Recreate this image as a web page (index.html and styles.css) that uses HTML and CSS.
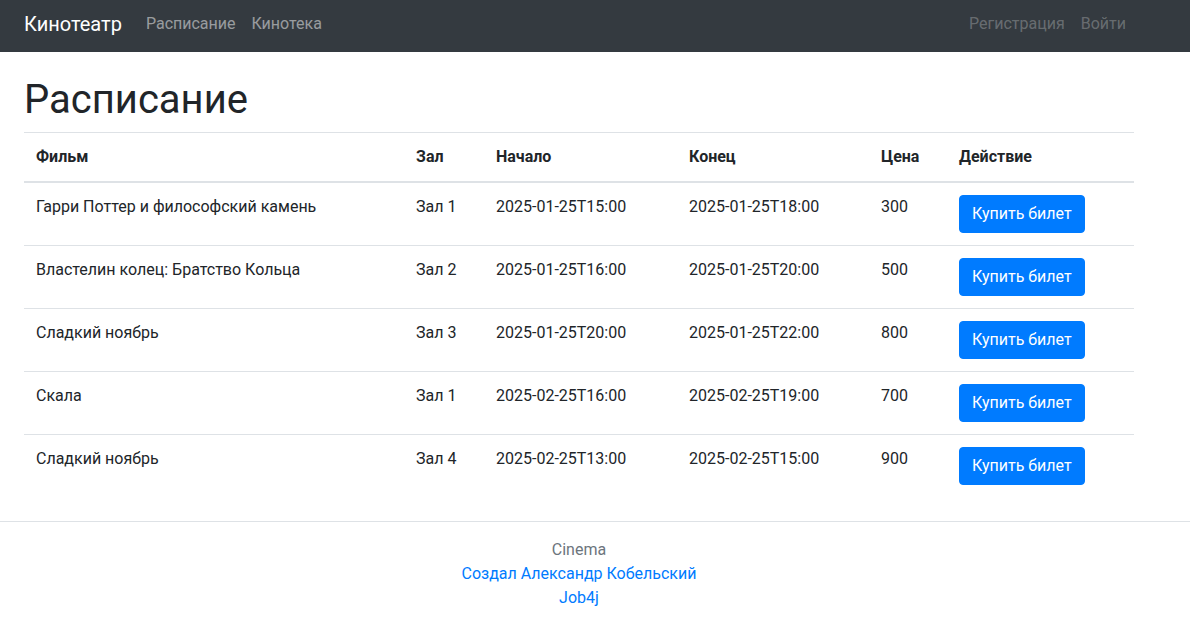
FILE: index.html
```html
<!DOCTYPE html>
<html lang="ru">
<head>
<meta charset="utf-8">
<title>Кинотеатр</title>
<link rel="stylesheet" href="styles.css">
</head>
<body>
<nav class="navbar">
  <div class="nav-inner">
    <a class="brand" href="#">Кинотеатр</a>
    <div class="nav-links">
      <a class="nav-link" href="#">Расписание</a>
      <a class="nav-link" href="#">Кинотека</a>
    </div>
    <div class="nav-links nav-right">
      <a class="nav-link dim" href="#">Регистрация</a>
      <a class="nav-link dim" href="#">Войти</a>
    </div>
  </div>
</nav>
<main class="container">
  <h1 class="title">Расписание</h1>
  <table class="table">
    <colgroup>
      <col class="c-film"><col class="c-hall"><col class="c-start"><col class="c-end"><col class="c-price"><col class="c-act">
    </colgroup>
    <thead>
      <tr><th>Фильм</th><th>Зал</th><th>Начало</th><th>Конец</th><th>Цена</th><th>Действие</th></tr>
    </thead>
    <tbody>
      <tr><td>Гарри Поттер и философский камень</td><td>Зал 1</td><td>2025-01-25T15:00</td><td>2025-01-25T18:00</td><td>300</td><td><a class="btn" href="#">Купить билет</a></td></tr>
      <tr><td>Властелин колец: Братство Кольца</td><td>Зал 2</td><td>2025-01-25T16:00</td><td>2025-01-25T20:00</td><td>500</td><td><a class="btn" href="#">Купить билет</a></td></tr>
      <tr><td>Сладкий ноябрь</td><td>Зал 3</td><td>2025-01-25T20:00</td><td>2025-01-25T22:00</td><td>800</td><td><a class="btn" href="#">Купить билет</a></td></tr>
      <tr><td>Скала</td><td>Зал 1</td><td>2025-02-25T16:00</td><td>2025-02-25T19:00</td><td>700</td><td><a class="btn" href="#">Купить билет</a></td></tr>
      <tr><td>Сладкий ноябрь</td><td>Зал 4</td><td>2025-02-25T13:00</td><td>2025-02-25T15:00</td><td>900</td><td><a class="btn" href="#">Купить билет</a></td></tr>
    </tbody>
  </table>
</main>
<footer class="footer">
  <div class="footer-inner">
    <div class="muted">Cinema</div>
    <a class="foot-link" href="#">Создал Александр Кобельский</a>
    <a class="foot-link" href="#">Job4j</a>
  </div>
</footer>
</body>
</html>
```
FILE: styles.css
```css
* { box-sizing: border-box; }
html, body { margin: 0; padding: 0; }
body {
  font-family: Roboto, "Liberation Sans", sans-serif;
  font-size: 16px;
  line-height: 1.5;
  color: #212529;
  background: #fff;
}
a { text-decoration: none; }

.navbar {
  background: #343a40;
  height: 52px;
}
.nav-inner {
  display: flex;
  align-items: center;
  height: 100%;
  padding: 0 56px 4px 24px;
}
.brand {
  color: #fff;
  font-size: 20px;
  line-height: 30px;
  margin-right: 16px;
}
.nav-links { display: flex; }
.nav-right { margin-left: auto; }
.nav-link {
  color: rgba(255,255,255,.5);
  padding: 8px;
  line-height: 24px;
}
.nav-link.dim { color: rgba(255,255,255,.27); }

.container {
  padding: 24px 56px 0 24px;
}
.title {
  font-size: 40px;
  font-weight: 400;
  line-height: 1.2;
  margin: 0 0 8px;
}
.table {
  width: 100%;
  border-collapse: collapse;
  table-layout: fixed;
  margin-bottom: 24px;
}
.c-film { width: 380px; }
.c-hall { width: 80px; }
.c-start { width: 193px; }
.c-end { width: 192px; }
.c-price { width: 78px; }
.c-act { width: 187px; }
.table th, .table td {
  padding: 12px;
  text-align: left;
  vertical-align: top;
  border-top: 1px solid #dee2e6;
}
.table th { font-weight: 700; }
.table thead th {
  vertical-align: bottom;
  border-bottom: 2px solid #dee2e6;
}
.table tbody tr:first-child td { border-top: 0; }

.btn {
  display: inline-block;
  background: #007bff;
  color: #fff;
  border: 1px solid #007bff;
  border-radius: 4px;
  padding: 6px 12px;
  line-height: 24px;
}

.footer {
  border-top: 1px solid #dee2e6;
  padding: 16px 56px 16px 24px;
}
.footer-inner {
  display: flex;
  flex-direction: column;
  align-items: center;
}
.muted { color: #6c757d; }
.foot-link { color: #007bff; }
```
